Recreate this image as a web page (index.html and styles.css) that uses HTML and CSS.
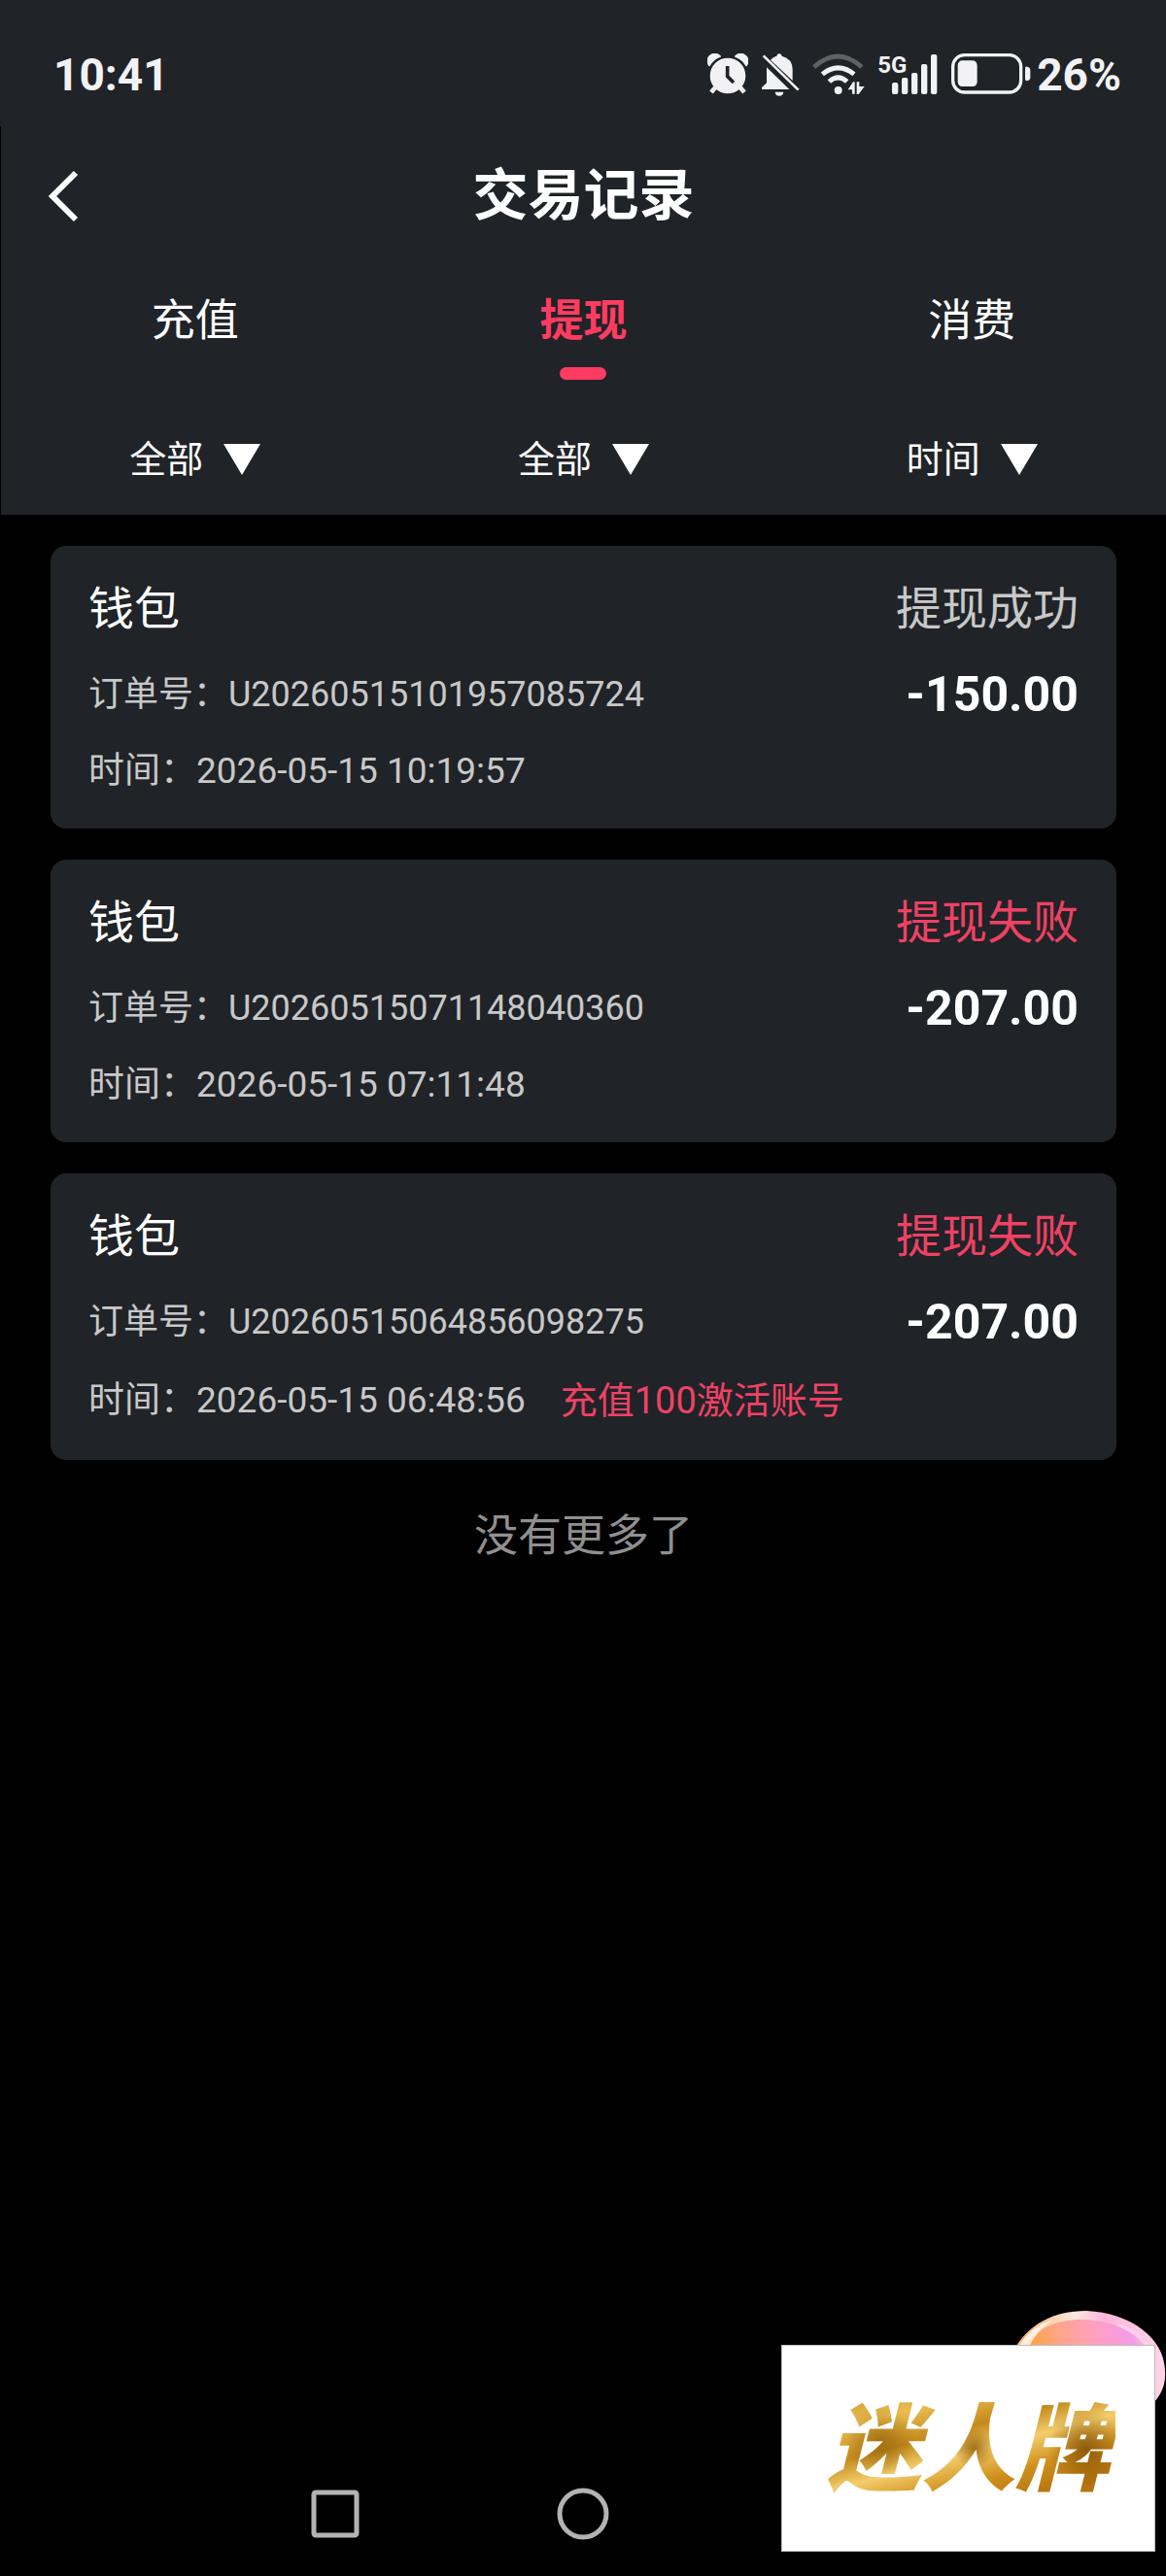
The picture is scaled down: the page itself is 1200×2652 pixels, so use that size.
FILE: index.html
```html
<!doctype html>
<html lang="zh-CN">
<head>
<meta charset="UTF-8">
<meta name="viewport" content="width=device-width">
<title>交易记录</title>
<link rel="stylesheet" href="styles.css">
</head>
<body>
<div class="status">
	<span>10:41</span>
	<div class="status-icons">
		<!-- alarm -->
		<svg width="42" height="44" viewBox="0 0 126 132" fill="#f2f2f4">
			<path d="M6 38A22 22 0 0 1 40 9Q17 17 6 38ZM120 38A22 22 0 0 0 86 9Q109 17 120 38Z" stroke="#f2f2f4" stroke-width="4" stroke-linejoin="round"/>
			<path d="M24 106l-12 14M102 106l12 14" stroke="#f2f2f4" stroke-width="14"/>
			<circle cx="63" cy="69" r="55"/>
			<path d="M62 39v32l19 19" fill="none" stroke="#202327" stroke-width="11"/>
		</svg>
		<!-- muted bell -->
		<svg width="40" height="44" viewBox="0 0 120 132" fill="#f2f2f4">
			<path d="M18 43L88 111H3V105L18 91ZM30 20Q39 10 49 8Q50 1 57 1T65 8Q98 16 98 50V84Z"/>
			<path d="M8 7L116 113" stroke="#f2f2f4" stroke-width="8"/>
			<path d="M44 119H70Q69 131 57 131T44 119Z"/>
		</svg>
		<!-- wifi -->
		<svg width="54" height="44" viewBox="0 0 162 132" fill="none" stroke="#f2f2f4" stroke-width="14">
			<path d="M5 42Q79-24 153 42" stroke="#5f6165"/>
			<path d="M31 64Q80 25 129 64M52 87Q80 62 107 87" stroke-width="15"/>
			<circle cx="80" cy="114" r="12" fill="#f2f2f4" stroke="none"/>
			<path d="M110 112L126 88H131V125H123V112ZM137 88H145V102H161L143 126H137Z" fill="#f2f2f4" stroke="none"/>
		</svg>
		<div class="signal">
			<span class="network">5G</span>
			<svg width="48" height="44" viewBox="0 0 144 132" fill="#f2f2f4">
				<rect x="0" y="90" width="19" height="36" rx="6"/>
				<rect x="30" y="75" width="19" height="51" rx="6"/>
				<rect x="60" y="60" width="19" height="66" rx="6"/>
				<rect x="90" y="33" width="19" height="93" rx="6"/>
				<rect x="120" y="3" width="19" height="123" rx="6"/>
			</svg>
		</div>
		<div class="battery">
			<svg width="82" height="44" viewBox="0 0 246 132" fill="#f2f2f4">
				<rect x="5" y="5" width="210" height="115" rx="36" fill="none" stroke="#f2f2f4" stroke-width="10"/>
				<rect x="20" y="22" width="60" height="80" rx="14"/>
				<path d="M228 46Q228 39 235 41Q244 43 244 52V74Q244 83 235 84Q228 86 228 79Z"/>
			</svg>
			<span>26%</span>
		</div>
	</div>
</div>
<div class="page">
	<header class="top">
		<div class="title-bar">
			<button class="back" aria-label="返回">
				<svg width="32" height="54" viewBox="0 0 32 54" fill="none" stroke="#fff" stroke-width="6"><path d="M29 3L5 27L29 51"/></svg>
			</button>
			<h1>交易记录</h1>
		</div>
		<nav class="tabs">
			<button class="tab">充值</button>
			<button class="tab active">提现</button>
			<button class="tab">消费</button>
		</nav>
		<div class="filters">
			<label class="filter">
				<select aria-label="类型"><option>全部</option></select>
				<svg width="38" height="32" viewBox="0 0 38 32" fill="#fff"><path d="M0 0H38L19 32Z"/></svg>
			</label>
			<label class="filter">
				<select aria-label="状态"><option>全部</option></select>
				<svg width="38" height="32" viewBox="0 0 38 32" fill="#fff"><path d="M0 0H38L19 32Z"/></svg>
			</label>
			<label class="filter">
				<select aria-label="时间"><option>时间</option></select>
				<svg width="38" height="32" viewBox="0 0 38 32" fill="#fff"><path d="M0 0H38L19 32Z"/></svg>
			</label>
		</div>
	</header>
	<main class="list">
		<article class="card">
			<div class="row head"><h2>钱包</h2><span>提现成功</span></div>
			<div class="row"><span>订单号：U20260515101957085724</span><strong>-150.00</strong></div>
			<div class="row time"><span>时间：2026-05-15 10:19:57</span></div>
		</article>
		<article class="card">
			<div class="row head"><h2>钱包</h2><span class="fail">提现失败</span></div>
			<div class="row"><span>订单号：U20260515071148040360</span><strong>-207.00</strong></div>
			<div class="row time"><span>时间：2026-05-15 07:11:48</span></div>
		</article>
		<article class="card">
			<div class="row head"><h2>钱包</h2><span class="fail">提现失败</span></div>
			<div class="row"><span>订单号：U20260515064856098275</span><strong>-207.00</strong></div>
			<div class="row time"><span>时间：2026-05-15 06:48:56</span><span class="note fail">充值100激活账号</span></div>
		</article>
		<p class="end">没有更多了</p>
	</main>
</div>
<div class="sysnav">
	<button aria-label="最近任务"><svg width="56" height="56" viewBox="0 0 56 56" fill="none" stroke="#b3b3b3" stroke-width="5"><rect x="6" y="6" width="44" height="44" rx="2"/></svg></button>
	<button aria-label="主屏幕"><svg width="56" height="56" viewBox="0 0 56 56" fill="none" stroke="#b3b3b3" stroke-width="5"><circle cx="28" cy="28" r="24"/></svg></button>
	<button aria-label="后退"><svg width="56" height="56" viewBox="0 0 56 56" fill="none" stroke="#b3b3b3" stroke-width="5"><path d="M44 6V50L8 28Z"/></svg></button>
</div>
<!-- floating bubble, partly under the brand plate -->
<svg class="bubble" width="162" height="120" viewBox="0 0 162 120">
	<defs>
		<linearGradient id="skin" x1="0" y1=".5" x2="1" y2=".3">
			<stop offset="0" stop-color="#f9a51f"/>
			<stop offset=".35" stop-color="#ffa58a"/>
			<stop offset=".62" stop-color="#ff9fc4"/>
			<stop offset=".85" stop-color="#f59be8"/>
			<stop offset="1" stop-color="#ffc3da"/>
		</linearGradient>
		<linearGradient id="rim" x1="0" y1="0" x2="1" y2="0">
			<stop offset="0" stop-color="#f9a860"/>
			<stop offset=".4" stop-color="#ffe9df"/>
			<stop offset=".6" stop-color="#ffb4d8"/>
			<stop offset="1" stop-color="#ffd5e6"/>
		</linearGradient>
	</defs>
	<path d="M5 42C20 15 46 1 80 1C126 3 160 29 161 62C162 76 158 86 149 96L60 118Z" fill="url(#rim)"/>
	<path d="M12 44C28 19 48 9 80 10C120 13 146 32 151 62V96L60 118Z" fill="url(#skin)"/>
	<path d="M10 38Q22 17 45 11Q28 22 21 38Z" fill="#fff" opacity=".75"/>
	<path d="M112 15Q140 25 150 48" fill="none" stroke="#ffd0ee" stroke-width="3"/>
</svg>
<div class="brand"><span>迷人牌</span></div>
</body>
</html>
```

FILE: styles.css
```css
*{box-sizing:border-box;}
body{margin:0;min-height:100vh;display:flex;flex-direction:column;background-color:#000;color:#fff;font-family:Roboto,"Noto Sans CJK SC",sans-serif;}
h1,h2,p{margin:0;}
svg{display:block;flex:none;}
button,select{margin:0;padding:0;border:0;background:none;color:inherit;font-family:inherit;}
.status{display:flex;justify-content:space-between;height:130px;padding:24px 46px 0 55px;align-items:center;background-color:#202327;color:#f2f2f4;font-size:46px;line-height:52px;font-weight:700;}
.status-icons{display:flex;align-items:center;gap:13px;}
.signal{display:flex;align-items:flex-start;}
.network{width:15px;font-size:24px;line-height:24px;}
.battery{display:flex;align-items:center;gap:6px;}
.page{flex:1;border-left:1px solid #000;}
.top{height:400px;background-color:#202327;}
.title-bar{display:grid;grid-template-columns:1fr auto 1fr;align-items:center;height:144px;padding:0 48px;}
.title-bar h1{font-size:57px;line-height:80px;font-weight:700;}
.back{justify-self:start;}
.tabs,.filters{display:grid;grid-template-columns:repeat(3,1fr);}
.tab{display:flex;flex-direction:column;align-items:center;gap:14px;padding-top:24px;font-size:45px;line-height:66px;}
.active{color:#fe3c62;font-weight:700;}
.active::after{content:"";width:48px;height:13px;border-radius:7px;background-color:#fe3c62;}
.filters{padding-top:54px;}
.filter{display:flex;justify-content:center;align-items:center;gap:20px;}
.filter select{appearance:none;font-size:38px;line-height:56px;}
.list{padding:32px 51px;display:flex;flex-direction:column;gap:32px;}
.card{display:flex;flex-direction:column;gap:24px;padding:30px 39px 33px;border-radius:16px;background-color:#202327;color:#c8c8c8;}
.row{display:flex;justify-content:space-between;align-items:center;font-size:36px;line-height:58px;}
.row h2{color:#fff;font-size:47px;font-weight:400;}
.head{font-size:47px;line-height:70px;}
.row strong{color:#fff;font-size:50px;}
.time{justify-content:flex-start;gap:36px;font-size:37px;line-height:52px;}
.row .fail{color:#ee4264;}
.note{font-size:38px;line-height:56px;}
.end{padding-top:14px;text-align:center;font-size:45px;line-height:66px;color:#8f8f8f;}
.sysnav{display:flex;justify-content:center;gap:199px;padding-bottom:36px;}
.bubble{position:fixed;right:0;bottom:154px;}
.brand{position:fixed;right:11px;bottom:25px;width:385px;height:213px;display:flex;align-items:center;justify-content:center;background-color:#fff;border:1px solid #bbb;}
.brand span{padding:4px 6px 0;font-size:97px;line-height:140px;font-weight:900;font-style:italic;color:transparent;background:radial-gradient(circle at 20% 45%,#8f5a06aa 0,#8f5a0600 14%),radial-gradient(circle at 52% 50%,#8f5a06cc 0,#8f5a0600 12%),radial-gradient(circle at 90% 50%,#7d4c04cc 0,#7d4c0400 14%),linear-gradient(165deg,#b87f14,#e9bd52 25%,#c48a1c 40%,#f3cd6c 52%,#d0901c 66%,#b57410 80%);-webkit-background-clip:text;background-clip:text;}
```
